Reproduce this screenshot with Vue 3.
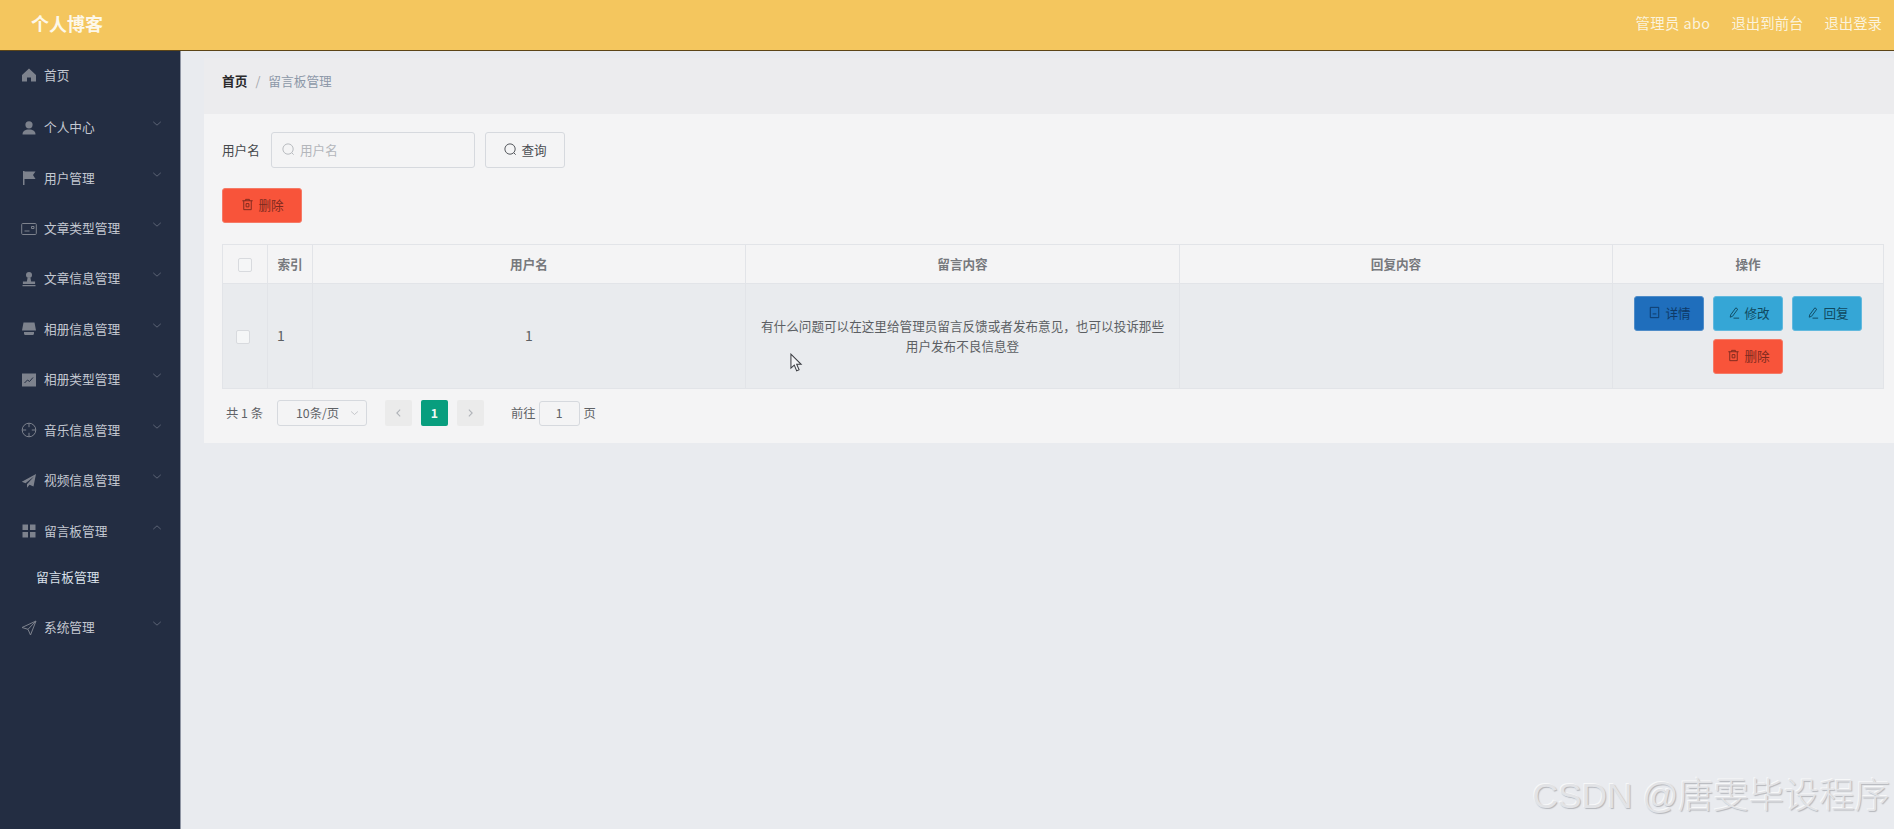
<template>
  <div class="page">
    <header class="topbar">
      <div class="site-title">个人博客</div>
      <div class="top-links">
        <span class="user-name">管理员 abo</span>
        <span>退出到前台</span>
        <span>退出登录</span>
      </div>
    </header>

    <div class="layout">
      <aside class="sidebar">
        <template v-for="item in menus" :key="item.title">
          <div class="menu-item">
            <svg class="menu-icon" viewBox="0 0 16 16" v-html="item.icon"></svg>
            <span class="menu-title">{{ item.title }}</span>
            <svg v-if="item.arrow" class="menu-arrow" viewBox="0 0 12 8">
              <path :d="item.open ? 'M1.5 6 6 2l4.5 4' : 'M1.5 2 6 6l4.5-4'" />
            </svg>
          </div>
          <div v-if="item.open" class="sub-item">{{ item.title }}</div>
        </template>
      </aside>

      <main class="main">
        <div class="breadcrumb">
          <b>首页</b>
          <i>/</i>
          <span>留言板管理</span>
        </div>

        <section class="panel">
          <div class="search-row">
            <label>用户名</label>
            <div class="search-input">
              <svg class="ico" viewBox="0 0 16 16"><circle cx="7.5" cy="7.5" r="5.5" /><path d="m11.5 11.5 2 2" /></svg>
              <span>用户名</span>
            </div>
            <button class="btn btn-plain">
              <svg class="ico" viewBox="0 0 16 16"><circle cx="7.5" cy="7.5" r="5.5" /><path d="m11.5 11.5 2 2" /></svg>
              查询
            </button>
          </div>

          <div class="tool-row">
            <button class="btn btn-red">
              <svg class="ico" viewBox="0 0 16 16"><path :d="trashPath" /></svg>
              删除
            </button>
          </div>

          <table class="data-table">
            <colgroup>
              <col style="width: 45px" />
              <col style="width: 45px" />
              <col style="width: 433px" />
              <col style="width: 434px" />
              <col style="width: 433px" />
              <col />
            </colgroup>
            <thead>
              <tr>
                <th><span class="check"></span></th>
                <th>索引</th>
                <th>用户名</th>
                <th>留言内容</th>
                <th>回复内容</th>
                <th>操作</th>
              </tr>
            </thead>
            <tbody>
              <tr>
                <td><span class="check check-row"></span></td>
                <td class="left num">1</td>
                <td class="num">1</td>
                <td class="msg">有什么问题可以在这里给管理员留言反馈或者发布意见，也可以投诉那些用户发布不良信息登</td>
                <td></td>
                <td class="ops">
                  <div class="actions">
                    <button class="btn btn-blue">
                      <svg class="ico" viewBox="0 0 16 16"><path d="M3.5 2.5h9v11h-9zM6 9.5h4" /></svg>
                      详情
                    </button>
                    <button class="btn btn-cyan">
                      <svg class="ico" viewBox="0 0 16 16"><path :d="editPath" /></svg>
                      修改
                    </button>
                    <button class="btn btn-cyan">
                      <svg class="ico" viewBox="0 0 16 16"><path :d="editPath" /></svg>
                      回复
                    </button>
                    <button class="btn btn-red">
                      <svg class="ico" viewBox="0 0 16 16"><path :d="trashPath" /></svg>
                      删除
                    </button>
                  </div>
                </td>
              </tr>
            </tbody>
          </table>

          <div class="pager">
            <span class="total">共 1 条</span>
            <div class="size-select">
              <span>10条/页</span>
              <svg viewBox="0 0 12 8"><path d="M1.5 2 6 6l4.5-4" /></svg>
            </div>
            <div class="page-btn">
              <svg viewBox="0 0 8 12"><path d="M6 2 2 6l4 4" /></svg>
            </div>
            <div class="page-btn active">1</div>
            <div class="page-btn">
              <svg viewBox="0 0 8 12"><path d="m2 2 4 4-4 4" /></svg>
            </div>
            <span class="jump-label">前往</span>
            <div class="jump-input">1</div>
            <span>页</span>
          </div>
        </section>
      </main>
    </div>

    <svg class="cursor" viewBox="0 0 14 20">
      <path d="M1 1v15l3.6-3.3L7.2 19l2.6-1.1-2.6-6H12z" />
    </svg>
    <div class="watermark">CSDN @唐雯毕设程序</div>
  </div>
</template>

<script setup>
const trashPath = 'M2.5 4h11M6 4V2.5h4V4M4 4v9.5h8V4M6.5 7v3.5h3V7z'
const editPath = 'M5 10.5 10.5 3l2 1.5L7 12l-2.5 1zM8 14h6'

const menus = [
  { title: '首页', arrow: false, icon: '<path class="f" d="M8 1.5 1 8v6.5h5v-4h4v4h5V8z"/>' },
  { title: '个人中心', arrow: true, icon: '<circle class="f" cx="8" cy="4.8" r="3.6"/><path class="f" d="M1.5 14.5c0-3.5 2.5-5 6.5-5s6.500 1.500 6.500 5z"/>' },
  { title: '用户管理', arrow: true, icon: '<path class="f" d="M2 1h1.500v14H2zM3.500 1.500h11l-2.500 3.500 2.500 4h-11z"/>' },
  { title: '文章类型管理', arrow: true, icon: '<rect x=".7" y="2.500" width="14.600" height="11" rx="1"/><path d="M3.500 10h5M10.500 5.500h2.500v2h-2.500z"/>' },
  { title: '文章信息管理', arrow: true, icon: '<circle class="f" cx="8" cy="4" r="3"/><path class="f" d="M6.500 7h3l.6 3.500h4v2.500H1.900v-2.500h4zM1.500 14h13v1.200h-13z"/>' },
  { title: '相册信息管理', arrow: true, icon: '<path class="f" d="M2.500 1.500h11l1.500 8H1zM3 11h10v1.500c0 1-1 1.500-1.500 1.500h-7C4 14 3 13.500 3 12.500z"/>' },
  { title: '相册类型管理', arrow: true, icon: '<path class="f" d="M1 1.500h14v13H1z"/><path class="n" d="m3.500 11 3-3 2 1.500 3.500-4"/>' },
  { title: '音乐信息管理', arrow: true, icon: '<circle cx="8" cy="8" r="6.800"/><path d="M8 1.200v4M8 10.800v4M1.200 8h4M10.800 8h4"/>' },
  { title: '视频信息管理', arrow: true, icon: '<path class="f" d="M15 1 .8 8.800l3.700 1.500L13 3.500 6 11.200v3.600l2.500-3L12.500 13.500z"/>' },
  { title: '留言板管理', arrow: true, open: true, icon: '<path class="f" d="M1.500 1.500h5.500V7H1.500zM9 1.500h5.500V7H9zM1.500 9H7v5.500H1.500zM9 9h5.500v5.500H9z"/>' },
  { title: '系统管理', arrow: true, icon: '<path d="M15 1 1 7.500l6 1.800L9.500 15z"/><path d="M15 1 7 9.300"/>' }
]
</script>

<style>
html,
body {
  margin: 0;
  background: #e9ebef;
  overflow: hidden;
}
</style>

<style scoped>
.page {
  position: relative;
  height: 100vh;
  display: flex;
  flex-direction: column;
  background: #e9ebef;
  font-family: "Noto Sans CJK SC", "Liberation Sans", sans-serif;
  font-size: 12.6px;
  color: #5f6266;
  overflow: hidden;
}

/* 顶栏 */
.topbar {
  height: 50px;
  flex: none;
  background: #f4c65e;
  border-bottom: 1px solid #5c4518;
  display: flex;
  justify-content: space-between;
  align-items: center;
  padding: 0 12px 0 31px;
  color: #fbf3dc;
}
.site-title {
  font-size: 18px;
  font-weight: 700;
  color: #fdf8ea;
  margin-top: -4px;
}
.top-links {
  display: flex;
  gap: 21px;
  font-size: 14.4px;
  margin-top: -5px;
}
.user-name {
  letter-spacing: 0.4px;
}

.layout {
  flex: 1;
  min-height: 0;
  display: flex;
}

/* 侧边栏 */
.sidebar {
  width: 180px;
  flex: none;
  background: #232d42;
  border-right: 1px solid #8f95a3;
}
.menu-item {
  height: 50.45px;
  display: flex;
  align-items: center;
  padding-left: 21px;
  font-size: 12.7px;
  color: #c3c8d1;
}
.menu-item:first-child {
  padding-bottom: 4px;
  box-sizing: border-box;
}
.menu-icon {
  width: 16px;
  height: 16px;
  margin-right: 7px;
  flex: none;
  position: relative;
  top: 1px;
  fill: none;
  stroke: #7d828d;
  stroke-width: 1;
}
.menu-icon :deep(.f) {
  fill: #7d828d;
  stroke: none;
}
.menu-icon :deep(.n) {
  stroke: #232d42;
}
.menu-title {
  flex: 1;
}
.menu-arrow {
  width: 10px;
  height: 7px;
  margin-right: 18px;
  position: relative;
  top: -3px;
  fill: none;
  stroke: #666e7e;
  stroke-width: 1;
}
.sub-item {
  height: 46px;
  box-sizing: border-box;
  display: flex;
  align-items: center;
  padding: 0 0 4px 36px;
  font-size: 12.7px;
  color: #d9e0ea;
}

/* 主区域 */
.main {
  flex: 1;
  min-width: 0;
  padding: 7px 0 0 23px;
}
.breadcrumb {
  height: 56px;
  box-sizing: border-box;
  display: flex;
  align-items: center;
  gap: 8px;
  padding: 0 0 12px 18px;
  background: #ececee;
  font-size: 12.7px;
}
.breadcrumb b {
  font-weight: 700;
  color: #2a2a2c;
}
.breadcrumb i {
  font-style: normal;
  color: #a3a6ab;
}
.breadcrumb span {
  color: #8d98a8;
}
.panel {
  height: 329px;
  box-sizing: border-box;
  background: #f4f4f5;
  padding: 18px 10px 0 18px;
}
.search-row {
  display: flex;
  align-items: center;
  height: 36px;
}
.search-row label {
  width: 49px;
  color: #45484c;
  padding-bottom: 2px;
}
.search-input {
  width: 204px;
  height: 36px;
  box-sizing: border-box;
  border: 1px solid #d6d9de;
  border-radius: 3px;
  display: flex;
  align-items: center;
  gap: 4px;
  padding: 0 0 2px 9px;
  color: #b3b6bb;
  margin-right: 10px;
}
.ico {
  width: 15px;
  height: 15px;
  fill: none;
  stroke: currentColor;
  stroke-width: 1;
  flex: none;
}
.btn {
  width: 80px;
  height: 35px;
  box-sizing: border-box;
  border: 1px solid transparent;
  border-radius: 3px;
  display: inline-flex;
  align-items: center;
  justify-content: center;
  gap: 3px;
  padding: 0 0 2px;
  font: inherit;
}
.btn-plain {
  height: 36px;
  border-color: #d6d9de;
  background: #f4f4f5;
  color: #4a4d52;
}
.btn-red {
  background: #f8543a;
  border-color: #f57a66;
  color: #7d2a1e;
}
.btn-blue {
  background: #1f6ebc;
  border-color: #4f8cc8;
  color: #0e3a68;
}
.btn-cyan {
  background: #35a6d6;
  border-color: #62b9de;
  color: #10495f;
}
.tool-row {
  margin: 20px 0 21px;
  height: 35px;
}

/* 表格 */
.data-table {
  width: 100%;
  table-layout: fixed;
  border-collapse: collapse;
  border: 1px solid #e2e4e8;
}
.data-table th,
.data-table td {
  box-sizing: border-box;
  border: 1px solid #e2e4e8;
  text-align: center;
  padding: 0;
}
.data-table th {
  height: 39px;
  padding-bottom: 2px;
  font-weight: 700;
  color: #77797d;
  background: #f4f4f5;
}
.data-table td {
  height: 105px;
  background: #e9ebee;
  color: #5c5f63;
}
.data-table td.num {
  font-size: 14px;
  padding-bottom: 2px;
}
.data-table td.left {
  text-align: left;
  padding-left: 9px;
}
.data-table td.msg {
  padding: 0 10px 1px;
  line-height: 20px;
}
.data-table td.ops {
  padding-bottom: 2px;
}
.check {
  display: inline-block;
  width: 12px;
  height: 12px;
  border: 1px solid #d8dade;
  border-radius: 2px;
  background: #f5f6f7;
  vertical-align: middle;
}
.check-row {
  position: relative;
  left: -2px;
  top: -1px;
}
.actions {
  display: flex;
  flex-wrap: wrap;
  justify-content: center;
  gap: 8px 9px;
}
.actions .btn {
  width: 70px;
}

/* 分页 */
.pager {
  height: 26px;
  margin-top: 11px;
  padding-left: 4px;
  display: flex;
  align-items: center;
  color: #5f6266;
  font-size: 12.3px;
}
.pager > * {
  flex: none;
  white-space: nowrap;
}
.total {
  width: 51px;
}
.size-select {
  width: 90px;
  height: 26px;
  box-sizing: border-box;
  border: 1px solid #d6d9de;
  border-radius: 3px;
  display: flex;
  align-items: center;
  justify-content: space-between;
  padding: 0 7px 0 18px;
  margin-right: 18px;
}
.size-select svg {
  width: 9px;
  height: 6px;
  fill: none;
  stroke: #b4b7bc;
}
.page-btn {
  width: 27px;
  height: 26px;
  margin-right: 9px;
  border-radius: 2px;
  background: #ebebeb;
  display: flex;
  align-items: center;
  justify-content: center;
}
.page-btn svg {
  width: 7px;
  height: 10px;
  fill: none;
  stroke: #b0b3b8;
  stroke-width: 1.3;
}
.page-btn.active {
  background: #089e7e;
  color: #eef8f4;
  font-weight: 700;
}
.jump-label {
  margin-left: 18px;
  margin-right: 3px;
}
.jump-input {
  width: 41px;
  height: 25px;
  box-sizing: border-box;
  border: 1px solid #d6d9de;
  border-radius: 3px;
  display: flex;
  align-items: center;
  justify-content: center;
  margin-right: 4px;
}

/* 鼠标和水印压在内容上 */
.cursor {
  position: absolute;
  left: 790px;
  top: 353px;
  width: 13px;
  height: 19px;
  fill: #f2f3f5;
  stroke: #3b3d42;
  stroke-width: 1.1;
}
.watermark {
  position: absolute;
  right: 4px;
  bottom: 11px;
  font-size: 35.3px;
  line-height: 44px;
  font-weight: 300;
  font-family: "Liberation Sans", "Noto Sans CJK SC", sans-serif;
  color: #e2e3e6;
  text-shadow: 1px 1px 1px #b4b6bb, -1px -1px 0 #f7f8f9;
  white-space: nowrap;
}
</style>
